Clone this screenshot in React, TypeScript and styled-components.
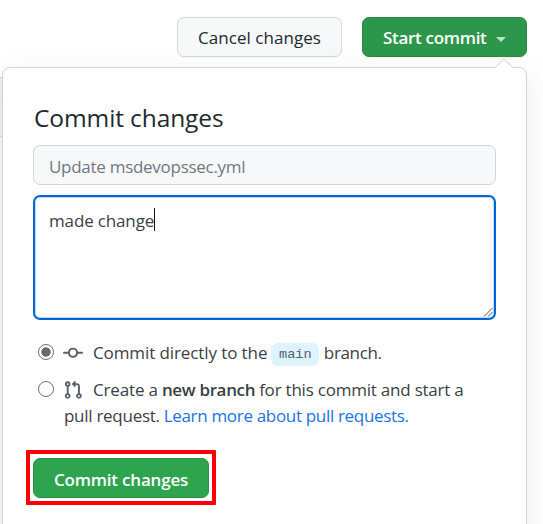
import React from "react";
import styled, { createGlobalStyle, css } from "styled-components";

const GlobalStyle = createGlobalStyle`
  *, *::before, *::after { box-sizing: border-box; }
  body {
    margin: 0;
    background: #fff;
    color: #24292e;
    font: 400 17px/26px "Open Sans", "Noto Sans", sans-serif;
  }
`;

const Page = styled.main`
  position: relative;
  height: 524px;
  overflow: hidden;
  display: flex;
  flex-direction: column;
`;

const Toolbar = styled.header`
  flex: none;
  display: flex;
  justify-content: flex-end;
  gap: 20px;
  height: 67px;
  padding: 17px 16px 0 0;
`;

const Button = styled.button<{ $variant?: "primary" | "default"; $open?: boolean }>`
  display: flex;
  align-items: center;
  height: 40px;
  padding: 0 20px;
  border: 1px solid #d5d8dc;
  border-radius: 7px;
  background: #f6f8fa;
  color: #24292e;
  font: 500 17px/26px "Open Sans", "Noto Sans", sans-serif;
  white-space: nowrap;
  box-shadow: 0 1px 0 rgba(27, 31, 35, 0.04);
  ${(p) =>
    p.$variant === "primary" &&
    css`
      border-color: ${p.$open ? "#2a8745" : "#2a9147"};
      background: ${p.$open ? "#2c974b" : "#2ea44f"};
      color: #fff;
      font-weight: 600;
    `}
`;

const ToolbarButton = styled(Button)`
  width: 165px;
  padding-top: 1px;
`;

const SubmitButton = styled(Button)`
  width: 176px;
  padding-top: 4px;
`;

const Caret = styled.span`
  width: 0;
  height: 0;
  margin: 3px 0 0 9px;
  border: 5px solid transparent;
  border-top-color: #c0dfc9;
  border-bottom: 0;
`;

const Tracked = styled.span<{ $tracking: number }>`
  letter-spacing: ${(p) => p.$tracking}px;
`;

const EditorEdge = styled.div`
  position: absolute;
  left: 0;
  top: 77px;
  width: 3px;
  height: 447px;
  border-top: 1px solid #d3dae1;
  background: linear-gradient(#edf0f3 0 58px, #d3dae1 58px 59px, #f6f7f8 59px);
`;

const Panel = styled.section`
  position: relative;
  flex: none;
  width: 525px;
  height: 500px;
  margin-left: 2px;
  padding: 36px 30px 0 30px;
  border: 1px solid #d1d5da;
  border-radius: 8px;
  background: #fff;
  box-shadow: 0 10px 30px rgba(149, 157, 165, 0.2);
`;

const Pointer = styled.svg`
  position: absolute;
  right: 12px;
  top: -10px;
`;

const Title = styled.h3`
  margin: 0 0 14px 1px;
  font-size: 24.5px;
  font-weight: 500;
  line-height: 27px;
`;

const SummaryField = styled.div`
  height: 40px;
  padding: 8px 15px 0;
  border: 1px solid #d1d5da;
  border-radius: 7px;
  background: #f6f8fa;
  color: #717983;
  line-height: 26px;
`;

const DescriptionField = styled.div`
  position: relative;
  height: 125px;
  margin-top: 10px;
  padding: 11px 14px;
  border: 2px solid #0366d6;
  border-radius: 7px;
  box-shadow: inset 0 0 0 1px #c3d9f3;
  color: #3a3f45;
`;

const TextCursor = styled.span`
  display: inline-block;
  width: 1px;
  height: 23px;
  background: #111;
  vertical-align: -4px;
`;

const ResizeHandle = styled.svg`
  position: absolute;
  right: 1px;
  bottom: 1px;
`;

const Choices = styled.div`
  margin-top: 19px;
`;

const Choice = styled.label`
  display: grid;
  grid-template-columns: 31px 1fr;
  line-height: 27px;
  color: #3a3f45;
  & + & { margin-top: 10px; }
`;

const Radio = styled.span<{ $checked?: boolean }>`
  width: 16px;
  height: 16px;
  margin: 5px 0 0 5px;
  border: 1px solid #707070;
  border-radius: 50%;
  background: ${(p) => (p.$checked ? "radial-gradient(circle, #6b6b6b 0 4.3px, transparent 5px)" : "#fff")};
`;

const ChoiceText = styled.div`
  white-space: nowrap;
`;

const Line = styled.div`
  display: flex;
  align-items: center;
  height: 27px;
`;

const LastLine = styled(Line)`
  height: 24px;
  margin-bottom: 2px;
`;

const IconSlot = styled.span`
  display: flex;
  width: 30px;
  margin-left: -1px;
`;

const BranchName = styled.code`
  width: 48px;
  height: 23px;
  margin: 3px 4.5px 0 4px;
  border-radius: 7px;
  background: #ddf4ff;
  color: #57606a;
  font: 13.6px/24px "Liberation Mono", monospace;
  text-align: center;
`;

const Strong = styled.b<{ $tracking: number }>`
  margin: 0 4px;
  font-weight: 600;
  letter-spacing: ${(p) => p.$tracking}px;
`;

const Link = styled.a`
  margin-left: 4px;
  color: #1a73e0;
  letter-spacing: -0.32px;
`;

const Highlight = styled.div`
  width: 190px;
  margin: 21px 0 0 -7px;
  padding: 4px 3px 3px 3px;
  border: 4px solid #fb0007;
  border-radius: 1px;
`;

function CommitIcon() {
  return (
    <svg width="20" height="20" viewBox="0 0 16 16" fill="#57606a">
      <path
        fillRule="evenodd"
        d="M10.5 7.75a2.5 2.5 0 11-5 0 2.5 2.5 0 015 0zm1.43.75a4.002 4.002 0 01-7.86 0H.75a.75.75 0 110-1.5h3.32a4.001 4.001 0 017.86 0h3.32a.75.75 0 110 1.5h-3.32z"
      />
    </svg>
  );
}

function PullRequestIcon() {
  return (
    <svg width="20" height="20" viewBox="0 0 16 16" fill="#57606a">
      <path
        fillRule="evenodd"
        d="M7.177 3.073L9.573.677A.25.25 0 0110 .854v4.792a.25.25 0 01-.427.177L7.177 3.427a.25.25 0 010-.354zM3.75 2.5a.75.75 0 100 1.5.75.75 0 000-1.5zm-2.25.75a2.25 2.25 0 113 2.122v5.256a2.251 2.251 0 11-1.5 0V5.372A2.25 2.25 0 011.5 3.25zM11 2.5h-1V4h1a1 1 0 011 1v5.628a2.251 2.251 0 101.5 0V5A2.5 2.5 0 0011 2.5zm1 10.25a.75.75 0 111.5 0 .75.75 0 01-1.5 0zM3.75 12a.75.75 0 100 1.5.75.75 0 000-1.5z"
      />
    </svg>
  );
}

export default function App() {
  return (
    <Page>
      <GlobalStyle />
      <EditorEdge />
      <Toolbar>
        <ToolbarButton>
          <Tracked $tracking={0.05}>Cancel changes</Tracked>
        </ToolbarButton>
        <ToolbarButton $variant="primary" $open>
          <Tracked $tracking={-0.3}>Start commit</Tracked>
          <Caret />
        </ToolbarButton>
      </Toolbar>
      <Panel>
        <Pointer width="20" height="11" viewBox="0 0 20 11">
          <path d="M1 11 L1.5 9.5 L10 1 L18.5 9.5 L19 11Z" fill="#fff" />
          <path d="M1.5 9.5 L10 1 L18.5 9.5" fill="none" stroke="#cbd0dc" />
        </Pointer>
        <Title>
          <Tracked $tracking={-0.1}>Commit changes</Tracked>
        </Title>
        <SummaryField>
          <Tracked $tracking={-0.28}>Update msdevopssec.yml</Tracked>
        </SummaryField>
        <DescriptionField>
          <Tracked $tracking={-0.15}>made change</Tracked>
          <TextCursor />
          <ResizeHandle width="10" height="10" viewBox="0 0 10 10">
            <path d="M1 9.5L9.5 1M5 9.5L9.5 5" stroke="#555" fill="none" />
          </ResizeHandle>
        </DescriptionField>
        <Choices>
          <Choice>
            <Radio $checked />
            <ChoiceText>
              <Line>
                <IconSlot><CommitIcon /></IconSlot>
                <Tracked $tracking={-0.1}>Commit directly to the</Tracked>
                <BranchName>main</BranchName>
                <Tracked $tracking={-0.35}>branch.</Tracked>
              </Line>
            </ChoiceText>
          </Choice>
          <Choice>
            <Radio />
            <ChoiceText>
              <Line>
                <IconSlot><PullRequestIcon /></IconSlot>
                <Tracked $tracking={-0.15}>Create a</Tracked>
                <Strong $tracking={-0.35}>new branch</Strong>
                <Tracked $tracking={-0.22}>for this commit and start a</Tracked>
              </Line>
              <LastLine>
                <Tracked $tracking={-0.28}>pull request.</Tracked>
                <Link>Learn more about pull requests.</Link>
              </LastLine>
            </ChoiceText>
          </Choice>
        </Choices>
        <Highlight>
          <SubmitButton $variant="primary">
            <Tracked $tracking={-0.2}>Commit changes</Tracked>
          </SubmitButton>
        </Highlight>
      </Panel>
    </Page>
  );
}
